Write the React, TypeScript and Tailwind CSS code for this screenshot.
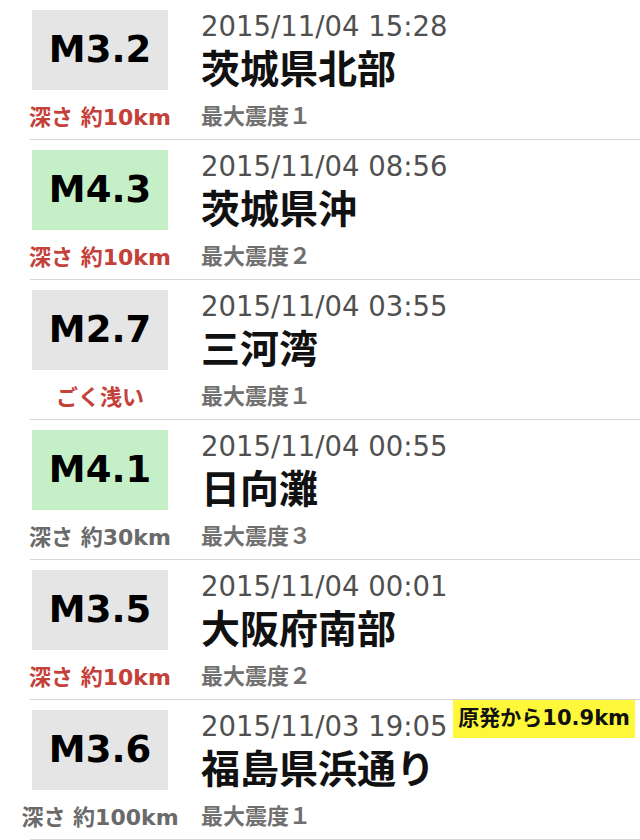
import React from 'react';

type Quake = {
  mag: string;
  strong: boolean;
  time: string;
  place: string;
  depth: string;
  shallowAlert: boolean;
  intensity: string;
  note?: string;
};

const quakes: Quake[] = [
  { mag: 'M3.2', strong: false, time: '2015/11/04 15:28', place: '茨城県北部', depth: '深さ 約10km', shallowAlert: true, intensity: '最大震度１' },
  { mag: 'M4.3', strong: true, time: '2015/11/04 08:56', place: '茨城県沖', depth: '深さ 約10km', shallowAlert: true, intensity: '最大震度２' },
  { mag: 'M2.7', strong: false, time: '2015/11/04 03:55', place: '三河湾', depth: 'ごく浅い', shallowAlert: true, intensity: '最大震度１' },
  { mag: 'M4.1', strong: true, time: '2015/11/04 00:55', place: '日向灘', depth: '深さ 約30km', shallowAlert: false, intensity: '最大震度３' },
  { mag: 'M3.5', strong: false, time: '2015/11/04 00:01', place: '大阪府南部', depth: '深さ 約10km', shallowAlert: true, intensity: '最大震度２' },
  { mag: 'M3.6', strong: false, time: '2015/11/03 19:05', place: '福島県浜通り', depth: '深さ 約100km', shallowAlert: false, intensity: '最大震度１', note: '原発から10.9km' },
];

const font = { fontFamily: '"DejaVu Sans", "Noto Sans CJK JP", sans-serif' };

export default function App() {
  return (
    <div className="w-[640px] h-[840px] bg-white overflow-hidden" style={font}>
      <div className="pl-[30px]">
        {quakes.map((q) => (
          <QuakeRow key={q.time} q={q} />
        ))}
      </div>
    </div>
  );
}

function QuakeRow({ q }: { q: Quake }) {
  return (
    <div className="relative flex h-[140px] border-b border-[#d9d9d9]">
      {/* magnitude + depth */}
      <div className="w-[140px] flex flex-col items-center pt-[10px]">
        <div
          className={`w-[136px] h-[80px] flex items-center justify-center text-[37px] font-bold text-black ${
            q.strong ? 'bg-[#c5f0c7]' : 'bg-[#e5e5e5]'
          }`}
        >
          {q.mag}
        </div>
        <div
          className={`mt-[14px] whitespace-nowrap text-[22px] leading-[28px] font-bold ${
            q.shallowAlert ? 'text-[#c4413a]' : 'text-[#6a6a6a]'
          }`}
        >
          {q.depth}
        </div>
      </div>

      {/* details */}
      <div className="ml-[31px] flex flex-col pt-[10px]">
        <div className="text-[27.5px] leading-[32px] text-[#505050] whitespace-nowrap">{q.time}</div>
        <div className="mt-[5px] text-[39px] leading-[46px] font-bold text-[#111111] whitespace-nowrap">{q.place}</div>
        <div className="mt-[10px] text-[22px] leading-[28px] font-bold text-[#707070] whitespace-nowrap">{q.intensity}</div>
      </div>

      {q.note && (
        <div className="absolute top-0 right-[5px] h-[38px] px-[5px] flex items-center bg-[#fff83a] text-[21px] font-bold text-[#111111] whitespace-nowrap">
          {q.note}
        </div>
      )}
    </div>
  );
}
